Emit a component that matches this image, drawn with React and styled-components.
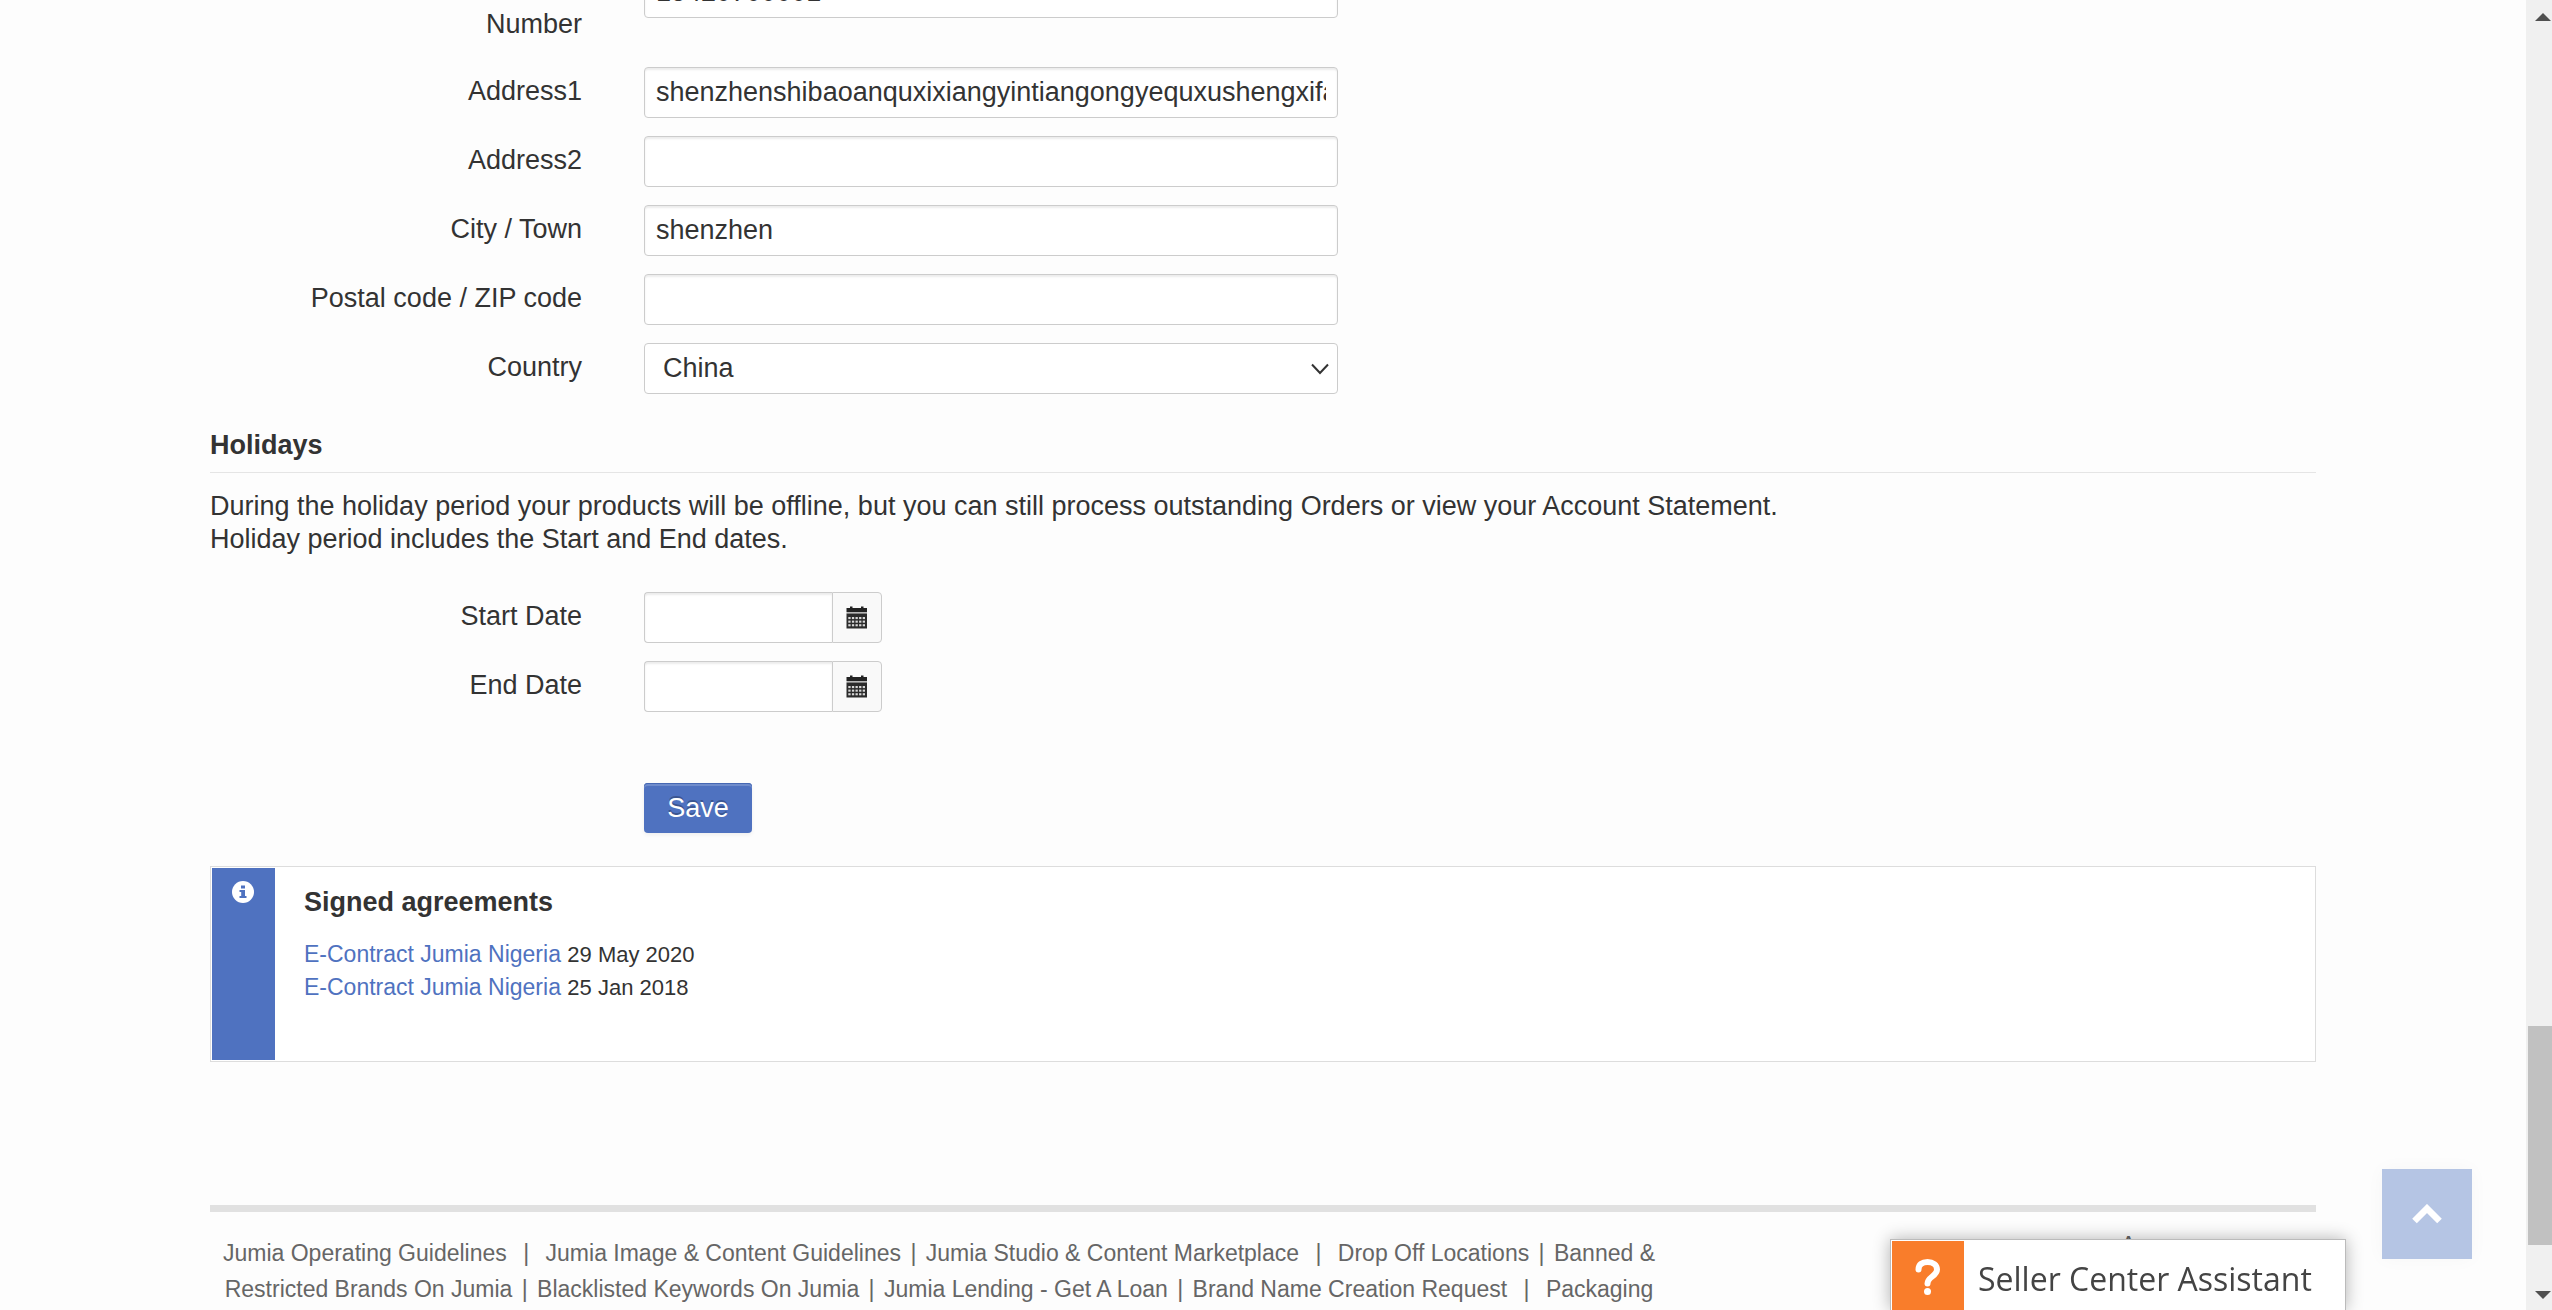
import React from "react";
import styled, { createGlobalStyle } from "styled-components";

const Global = createGlobalStyle`
  *, *::before, *::after { box-sizing: border-box; }
  html, body { margin: 0; height: 100%; overflow: hidden; background: #fdfdfd; }
  body {
    font-family: "Liberation Sans", Arial, Helvetica, sans-serif;
    font-size: 27px;
    line-height: 33px;
    color: #333;
  }
  input, select, button { font: inherit; color: inherit; margin: 0; }
`;

const Screen = styled.div`
  display: grid;
  grid-template-columns: 1fr 26px;
  height: 100vh;
`;

const Viewport = styled.main`
  overflow: hidden;
  min-width: 0;
`;

/* The view is scrolled part of the way down the settings form. */
const Content = styled.div`
  margin-top: -33px;
  padding: 0 210px;
`;

const Fields = styled.div`
  display: flex;
  flex-direction: column;
  gap: 18px;
`;

const Row = styled.div`
  display: grid;
  grid-template-columns: 372px 694px;
  column-gap: 62px;
  align-items: start;
`;

const Label = styled.label`
  padding: 8px 0;
  text-align: right;
`;

const TextInput = styled.input`
  width: 100%;
  height: 51px;
  padding: 0 11px;
  border: 1px solid #ccc;
  border-radius: 4px;
  background: #fff;
  box-shadow: inset 0 2px 2px rgba(0, 0, 0, 0.08);
  outline: none;
`;

const SelectWrap = styled.div`
  display: grid;
  align-items: center;

  > * { grid-area: 1 / 1; }
  > svg { justify-self: end; margin-right: 9px; pointer-events: none; }
`;

const Select = styled.select`
  width: 100%;
  height: 51px;
  padding: 0 18px;
  border: 1px solid #ccc;
  border-radius: 4px;
  background: #fff;
  appearance: none;
`;

const SectionTitle = styled.h2`
  margin: 35px 0 17px;
  padding-bottom: 10px;
  border-bottom: 1px solid #e5e5e5;
  font-size: 27px;
  font-weight: bold;
`;

const Intro = styled.p`
  margin: 0 0 36px;
`;

const DateGroup = styled.div`
  display: flex;
  width: 238px;
`;

const DateInput = styled(TextInput)`
  flex: 1;
  min-width: 0;
  border-right: 0;
  border-radius: 4px 0 0 4px;
`;

const DateButton = styled.button`
  display: flex;
  align-items: center;
  justify-content: center;
  width: 50px;
  height: 51px;
  padding: 0 0 2px;
  border: 1px solid #ccc;
  border-radius: 0 4px 4px 0;
  background: #f9f9f9;
`;

const Actions = styled.div`
  margin: 71px 0 33px;
  padding-left: 434px;
`;

const SaveButton = styled.button`
  display: block;
  width: 108px;
  height: 50px;
  padding: 0;
  border: 0;
  border-radius: 4px;
  background: #4f72c0;
  color: #fff;
  text-shadow: 0 -2px 0 rgba(0, 0, 0, 0.25);
  box-shadow: inset 0 1px 0 #4668b3, inset 0 3px 0 #6f8ccc, 0 2px 4px rgba(0, 0, 0, 0.06);
`;

const Notice = styled.section`
  display: flex;
  min-height: 196px;
  padding: 1px;
  border: 1px solid #ddd;
  background: #fff;
`;

const NoticeIcon = styled.div`
  width: 63px;
  padding: 13px 0 0 20px;
  background: #4f72c0;

  svg { display: block; }
`;

const NoticeBody = styled.div`
  padding: 18px 29px;
`;

const NoticeTitle = styled.h3`
  margin: 0 0 19px;
  font-size: 27px;
  font-weight: bold;
`;

const Agreements = styled.ul`
  margin: 0;
  padding: 0;
  list-style: none;
  font-size: 23px;

  time { font-size: 22px; }
`;

const Link = styled.a`
  color: #4f72c0;
  text-decoration: none;
`;

const Footer = styled.footer`
  display: grid;
  grid-template-columns: 1458px 1fr;
  margin-top: 143px;
  border-top: 7px solid #e1e1e1;
  color: #666;
  font-size: 23px;
  line-height: 36px;
`;

const FooterLinks = styled.nav`
  padding-top: 23px;
  text-align: center;
  white-space: nowrap;

  a { color: inherit; text-decoration: none; }
`;

const Divider = styled.span`
  padding: 0 ${(p) => (p.$wide ? "10px 0 10px" : "3px")};
`;

const FooterAside = styled.div`
  padding: 15px 180px 0 0;
  text-align: right;
`;

const Assistant = styled.button`
  position: fixed;
  right: 206px;
  bottom: 0;
  display: flex;
  width: 456px;
  height: 71px;
  padding: 1px 1px 0;
  border: 1px solid #bbb;
  border-bottom: 0;
  background: #fff;
  box-shadow: 0 0 16px rgba(0, 0, 0, 0.3);
  color: #444;
  font-family: "Open Sans", "Noto Sans", sans-serif;
  font-size: 32px;
  line-height: 44px;
  text-align: left;
`;

const AssistantIcon = styled.span`
  width: 72px;
  height: 69px;
  padding: 18px 0 0 23px;
  background: #f97d2b;

  svg { display: block; }
`;

const AssistantText = styled.span`
  padding: 16px 0 0 14px;
  white-space: nowrap;
`;

const ToTop = styled.button`
  position: fixed;
  right: 80px;
  bottom: 51px;
  display: flex;
  align-items: center;
  justify-content: center;
  width: 90px;
  height: 90px;
  padding: 0;
  border: 0;
  background: #b5c5e4;
  box-shadow: 0 0 18px rgba(0, 0, 0, 0.03);
`;

const ScrollTrack = styled.div`
  display: flex;
  flex-direction: column;
  align-items: flex-end;
  justify-content: flex-end;
  background: #f0f0f0;
`;

const Arrow = styled.svg`
  display: block;
  margin: ${(p) => (p.$up ? "13px 1px auto" : "46px 1px 11px")};
`;

const Thumb = styled.div`
  width: 24px;
  height: 219px;
  background: #c1c1c1;
`;

function CalendarIcon() {
  return (
    <svg width="22" height="24" viewBox="0 0 22 24" aria-hidden="true">
      <path d="M0.5 3h3.5v-1.5h2.5v1.500h8.500v-1.500h2.500v1.500h3.500v4h-20.500z" fill="#222" />
      <path d="M0.500 7h20.500v1.500h-20.500z" fill="#b8b8b8" />
      <path d="M0.500 8.500h20.500v15h-20.500z" fill="#2b2b2b" />
      {[12, 15.6, 19.2].map((y) =>
        [2.3, 5.9, 9.5, 13.1, 16.7].map((x) => (
          <rect key={`${x}-${y}`} x={x} y={y} width="2.300" height="2.100" fill="#d8d8d8" />
        ))
      )}
    </svg>
  );
}

function TextRow({ id, label, value = "" }) {
  return (
    <Row>
      <Label htmlFor={id}>{label}</Label>
      <TextInput id={id} type="text" defaultValue={value} />
    </Row>
  );
}

function DateRow({ id, label }) {
  return (
    <Row>
      <Label htmlFor={id}>{label}</Label>
      <DateGroup>
        <DateInput id={id} type="text" />
        <DateButton type="button" aria-label={label}>
          <CalendarIcon />
        </DateButton>
      </DateGroup>
    </Row>
  );
}

const footerLines = [
  [
    ["Jumia Operating Guidelines", true],
    ["Jumia Image & Content Guidelines", false],
    ["Jumia Studio & Content Marketplace", true],
    ["Drop Off Locations", false],
    ["Banned &", null],
  ],
  [
    ["Restricted Brands On Jumia", false],
    ["Blacklisted Keywords On Jumia", false],
    ["Jumia Lending - Get A Loan", false],
    ["Brand Name Creation Request", true],
    ["Packaging", null],
  ],
];

const agreements = [
  ["E-Contract Jumia Nigeria", "29 May 2020"],
  ["E-Contract Jumia Nigeria", "25 Jan 2018"],
];

export default function App() {
  return (
    <Screen>
      <Global />
      <Viewport>
        <Content>
          <Fields>
            <TextRow id="phone" label="Customer Service Phone Number" value="15420700001" />
            <TextRow
              id="address1"
              label="Address1"
              value="shenzhenshibaoanquxixiangyintiangongyequxushengxifa"
            />
            <TextRow id="address2" label="Address2" />
            <TextRow id="city" label="City / Town" value="shenzhen" />
            <TextRow id="zip" label="Postal code / ZIP code" />
            <Row>
              <Label htmlFor="country">Country</Label>
              <SelectWrap>
                <Select id="country" defaultValue="China">
                  <option>China</option>
                </Select>
                <svg width="18" height="12" viewBox="0 0 18 12" aria-hidden="true">
                  <path d="M1 1.500l8 8.500 8-8.500" fill="none" stroke="#333" strokeWidth="2" />
                </svg>
              </SelectWrap>
            </Row>
          </Fields>

          <SectionTitle>Holidays</SectionTitle>
          <Intro>
            During the holiday period your products will be offline, but you can still process
            outstanding Orders or view your Account Statement.
            <br />
            Holiday period includes the Start and End dates.
          </Intro>
          <Fields>
            <DateRow id="start" label="Start Date" />
            <DateRow id="end" label="End Date" />
          </Fields>
          <Actions>
            <SaveButton type="button">Save</SaveButton>
          </Actions>

          <Notice>
            <NoticeIcon>
              <svg width="22" height="22" viewBox="0 0 22 22" aria-hidden="true">
                <circle cx="11" cy="11" r="11" fill="#fff" />
                <path
                  d="M9 4.500h4v3h-4zM7.500 9h5.500v6h1.500v2h-7v-2h1.700v-4h-1.700z"
                  fill="#4f72c0"
                />
              </svg>
            </NoticeIcon>
            <NoticeBody>
              <NoticeTitle>Signed agreements</NoticeTitle>
              <Agreements>
                {agreements.map(([name, date]) => (
                  <li key={date}>
                    <Link href="#">{name}</Link> <time>{date}</time>
                  </li>
                ))}
              </Agreements>
            </NoticeBody>
          </Notice>

          <Footer>
            <FooterLinks>
              {footerLines.map((line, i) => (
                <div key={i}>
                  {line.map(([text, wide]) => (
                    <React.Fragment key={text}>
                      <a href="#">{text}</a>
                      {wide !== null && <Divider $wide={wide}> | </Divider>}
                    </React.Fragment>
                  ))}
                </div>
              ))}
            </FooterLinks>
            <FooterAside>A</FooterAside>
          </Footer>
        </Content>
      </Viewport>

      <ScrollTrack aria-hidden="true">
        <Arrow $up width="16" height="8" viewBox="0 0 16 8">
          <path d="M0 8l8-8 8 8z" fill="#505050" />
        </Arrow>
        <Thumb />
        <Arrow width="16" height="8" viewBox="0 0 16 8">
          <path d="M0 0l8 8 8-8z" fill="#505050" />
        </Arrow>
      </ScrollTrack>

      <ToTop type="button" aria-label="Back to top">
        <svg width="30" height="20" viewBox="0 0 30 20" aria-hidden="true">
          <path d="M2.500 17l12.500-12.500 12.500 12.500" fill="none" stroke="#fff" strokeWidth="6.500" />
        </svg>
      </ToTop>

      <Assistant type="button">
        <AssistantIcon>
          <svg width="26" height="36" viewBox="0 0 26 36" aria-hidden="true">
            <path
              d="M3.500 10.500C3.500 5.500 7 3 12.500 3c5.500 0 9.500 3 9.500 7.500 0 6.500-9.500 7.500-9.500 14"
              fill="none"
              stroke="#fff"
              strokeWidth="6"
              strokeLinecap="round"
            />
            <circle cx="12.500" cy="32.500" r="3.500" fill="#fff" />
          </svg>
        </AssistantIcon>
        <AssistantText>Seller Center Assistant</AssistantText>
      </Assistant>
    </Screen>
  );
}
